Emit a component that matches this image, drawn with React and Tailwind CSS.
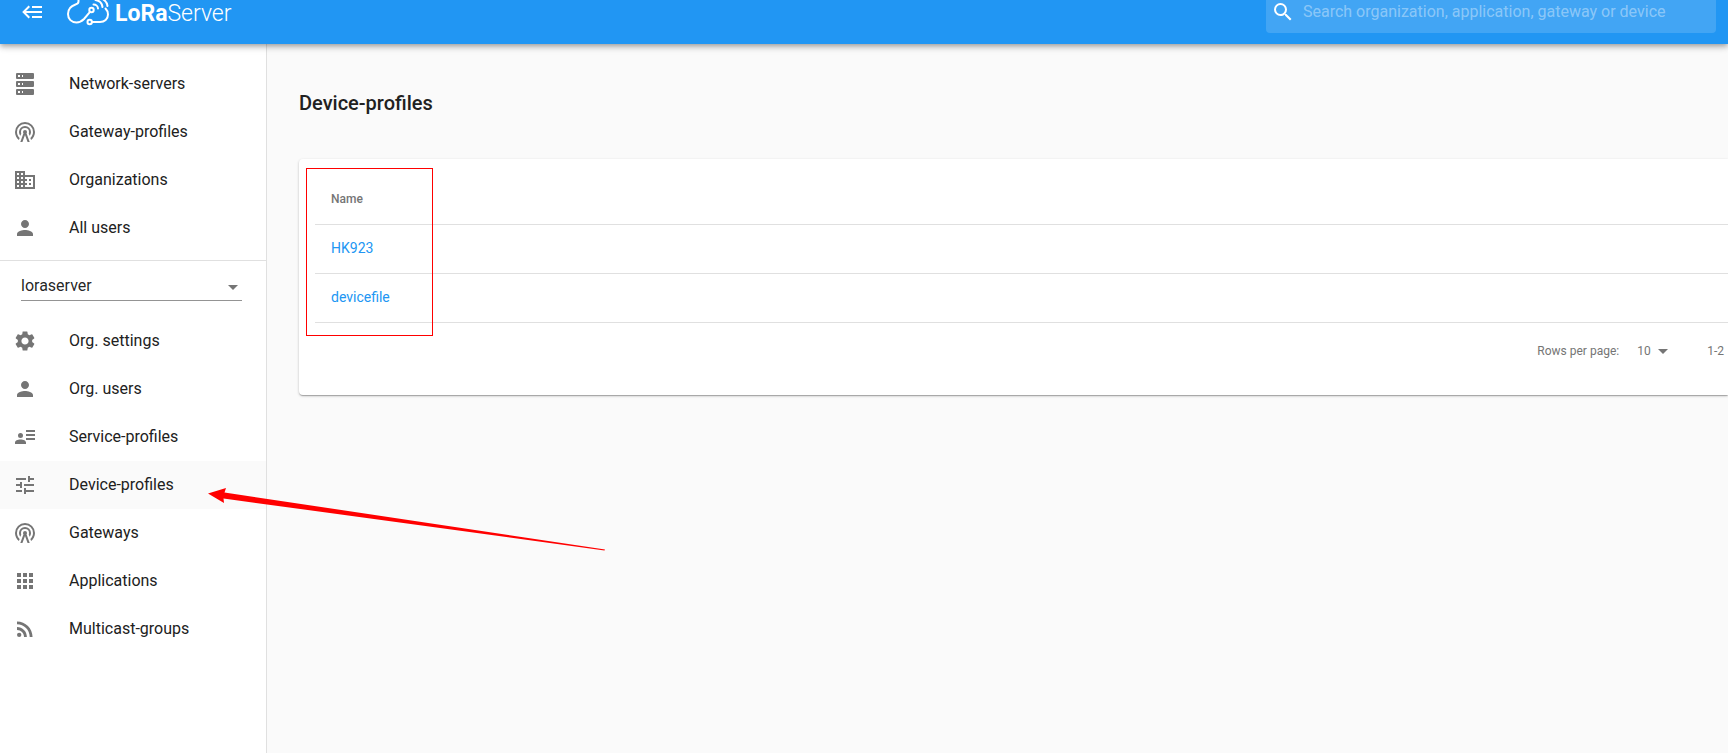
import React from "react";
import {
  MdApps,
  MdArrowDropDown,
  MdDomain,
  MdPerson,
  MdRssFeed,
  MdSearch,
  MdSettings,
  MdTune,
} from "react-icons/md";

const Icon = ({ d }) => (
  <svg viewBox="0 0 24 24" className="w-6 h-6" fill="currentColor" aria-hidden="true">
    <path d={d} />
  </svg>
);

const BackburgerIcon = () => (
  <Icon d="M5,13L9,17L7.6,18.42L1.18,12L7.6,5.58L9,7L5,11H21V13H5M21,6V8H11V6H21M21,16V18H11V16H21Z" />
);

const ServerIcon = () => (
  <Icon d="M4,1H20A1,1 0 0,1 21,2V6A1,1 0 0,1 20,7H4A1,1 0 0,1 3,6V2A1,1 0 0,1 4,1M4,9H20A1,1 0 0,1 21,10V14A1,1 0 0,1 20,15H4A1,1 0 0,1 3,14V10A1,1 0 0,1 4,9M4,17H20A1,1 0 0,1 21,18V22A1,1 0 0,1 20,23H4A1,1 0 0,1 3,22V18A1,1 0 0,1 4,17M9,5H10V3H9V5M9,13H10V11H9V13M9,21H10V19H9V21M5,3V5H7V3H5M5,11V13H7V11H5M5,19V21H7V19H5Z" />
);

const RadioTowerIcon = () => (
  <Icon d="M12,10A2,2 0 0,1 14,12C14,12.5 13.82,12.94 13.53,13.29L16.7,22H14.57L12,14.93L9.43,22H7.3L10.47,13.29C10.18,12.94 10,12.5 10,12A2,2 0 0,1 12,10M12,8A4,4 0 0,0 8,12C8,12.5 8.1,13 8.28,13.46L7.4,15.86C6.53,14.81 6,13.47 6,12A6,6 0 0,1 12,6A6,6 0 0,1 18,12C18,13.47 17.47,14.81 16.6,15.86L15.72,13.46C15.9,13 16,12.5 16,12A4,4 0 0,0 12,8M12,4A8,8 0 0,0 4,12C4,14.36 5,16.5 6.64,17.94L5.92,19.94C3.54,18.11 2,15.23 2,12A10,10 0 0,1 12,2A10,10 0 0,1 22,12C22,15.23 20.46,18.11 18.08,19.94L17.36,17.94C19,16.5 20,14.36 20,12A8,8 0 0,0 12,4Z" />
);

const AccountDetailsIcon = () => (
  <Icon d="M13,5H22V7H13V5M13,9H22V11H13V9M13,13H22V15H13V13M7.5,8A2.5,2.5 0 1,1 7.5,13A2.5,2.5 0 1,1 7.5,8M7.5,14.5C10.5,14.5 13,15.8 13,17.5V19H2V17.5C2,15.8 4.5,14.5 7.5,14.5Z" />
);

const adminLinks = [
  { label: "Network-servers", icon: ServerIcon },
  { label: "Gateway-profiles", icon: RadioTowerIcon },
  { label: "Organizations", icon: MdDomain },
  { label: "All users", icon: MdPerson },
];

const orgLinks = [
  { label: "Org. settings", icon: MdSettings },
  { label: "Org. users", icon: MdPerson },
  { label: "Service-profiles", icon: AccountDetailsIcon },
  { label: "Device-profiles", icon: MdTune, active: true },
  { label: "Gateways", icon: RadioTowerIcon },
  { label: "Applications", icon: MdApps },
  { label: "Multicast-groups", icon: MdRssFeed },
];

const profiles = ["HK923", "devicefile"];

const Logo = () => (
  <a href="#" className="flex items-center gap-1.5 text-white" aria-label="LoRaServer">
    <svg
      viewBox="0 -5 44 34"
      className="w-11 h-[34px]"
      fill="none"
      stroke="currentColor"
      strokeWidth="2"
      strokeLinecap="round"
      aria-hidden="true"
    >
      {/* cloud outline, open where the traces run into it */}
      <path d="M13.500 -5V1.500C13.500 3 12.500 4 10.500 4.500C6 6 3 9.500 3 14C3 19 6.500 22.500 11.500 22.500C15 22.500 17 21 19 19L25 11.800" />
      <path d="M26.800 22H35C39.500 22 43 19 43 14.500C43 12 42 10 40.500 8.500" />
      <circle cx="26.500" cy="10" r="2.200" />
      <circle cx="24.700" cy="22" r="2.200" />
      {/* radio waves */}
      <path d="M28.500 4.500C31 4.500 33 6.200 33 8.500" />
      <path d="M30.500 0C34.500 0.500 37 3.500 37.500 7" />
      <path d="M35.500 -2C39.500 -0.500 42 2.500 42.500 6" />
    </svg>
    <span className="mt-1 text-[23px] leading-6">
      <span className="font-bold">LoRa</span>
      <span className="font-light">Server</span>
    </span>
  </a>
);

const NavList = ({ links }) => (
  <ul className="py-2">
    {links.map(({ label, icon: NavIcon, active }) => (
      <li key={label}>
        <a
          href="#"
          className={`flex items-center h-12 pl-[13px] gap-8 text-base text-[#212121] ${active ? "bg-[#fafafa]" : ""}`}
        >
          <span className="text-2xl text-[#757575]">
            <NavIcon />
          </span>
          {label}
        </a>
      </li>
    ))}
  </ul>
);

const Header = () => (
  <header className="relative z-10 flex items-start justify-between h-11 bg-[#2196f3] pr-3 shadow-[0_2px_4px_-1px_rgba(0,0,0,0.2),0_4px_5px_0_rgba(0,0,0,0.14),0_1px_10px_0_rgba(0,0,0,0.12)]">
    <div className="flex items-center h-6 pl-[21px] gap-5 text-white">
      <button type="button" aria-label="Toggle menu">
        <BackburgerIcon />
      </button>
      <Logo />
    </div>
    <label className="flex items-center w-[450px] h-[33px] pb-[9px] pl-[5px] gap-2 rounded-b bg-white/15 text-white">
      <MdSearch className="w-6 h-6" />
      <input
        type="text"
        aria-label="Search"
        placeholder="Search organization, application, gateway or device"
        className="flex-1 text-base leading-6 placeholder:text-white/40 focus:outline-none"
      />
    </label>
  </header>
);

const Sidebar = () => (
  <nav className="w-[267px] shrink-0 bg-white border-r border-[#e0e0e0] pt-2">
    <NavList links={adminLinks} />
    <div className="border-t border-[#e0e0e0] pt-[9px] pb-2 pl-[21px] pr-6">
      <div className="relative border-b border-[#949494]">
        <select
          aria-label="Organization"
          className="block appearance-none w-full h-[30px] pt-0.5 text-base text-black/87 bg-transparent"
        >
          <option>loraserver</option>
        </select>
        <MdArrowDropDown className="absolute -right-[3px] top-[5px] w-6 h-6 text-[#757575] pointer-events-none" />
      </div>
    </div>
    <NavList links={orgLinks} />
  </nav>
);

const Pagination = () => (
  <div className="flex items-center justify-end h-14 pr-1 text-xs text-[#757575] whitespace-nowrap">
    <label htmlFor="rows">Rows per page:</label>
    <div className="relative ml-4 mr-8">
      <select id="rows" className="appearance-none w-10 h-6 pl-0.5 bg-transparent">
        <option>10</option>
      </select>
      <MdArrowDropDown className="absolute right-0 top-0 w-6 h-6 pointer-events-none" />
    </div>
    <span>1-2</span>
  </div>
);

const DeviceProfiles = () => (
  <main className="flex-1 min-w-0 pl-8 pt-[45px]">
    <h1 className="text-xl leading-7 font-medium text-[#212121]">Device-profiles</h1>
    <section className="relative mt-[42px] pt-4 pl-4 pb-4 rounded-l bg-white shadow-[0_1px_3px_0_rgba(0,0,0,0.2),0_1px_1px_0_rgba(0,0,0,0.14),0_2px_1px_-1px_rgba(0,0,0,0.12)]">
      <table className="w-full text-left">
        <thead>
          <tr className="h-[49px] border-b border-[#e0e0e0]">
            <th className="pl-4 text-xs font-medium text-[#757575]">Name</th>
          </tr>
        </thead>
        <tbody>
          {profiles.map((name) => (
            <tr key={name} className="h-[49px] border-b border-[#e0e0e0]">
              <td className="pl-4 pb-0.5 text-sm">
                <a href="#" className="text-[#2196f3]">{name}</a>
              </td>
            </tr>
          ))}
        </tbody>
      </table>
      <Pagination />
      <div className="absolute left-[7px] top-[9px] w-[127px] h-[168px] border border-[#ff0000]" />
    </section>
  </main>
);

const App = () => (
  <div className="relative flex flex-col min-h-screen overflow-hidden bg-[#fafafa] font-[Roboto,sans-serif]">
    <Header />
    <div className="flex flex-1">
      <Sidebar />
      <DeviceProfiles />
    </div>
    <svg
      viewBox="0 0 398 60"
      className="absolute left-[208px] top-[490px] w-[398px] h-[60px] overflow-visible pointer-events-none"
      fill="#ff0000"
      aria-hidden="true"
    >
      <path d="M0 3.500L18-2L16.500 2.500L397 59.500L396.500 60.500L15.500 8.500L16 13Z" />
    </svg>
  </div>
);

export default App;
